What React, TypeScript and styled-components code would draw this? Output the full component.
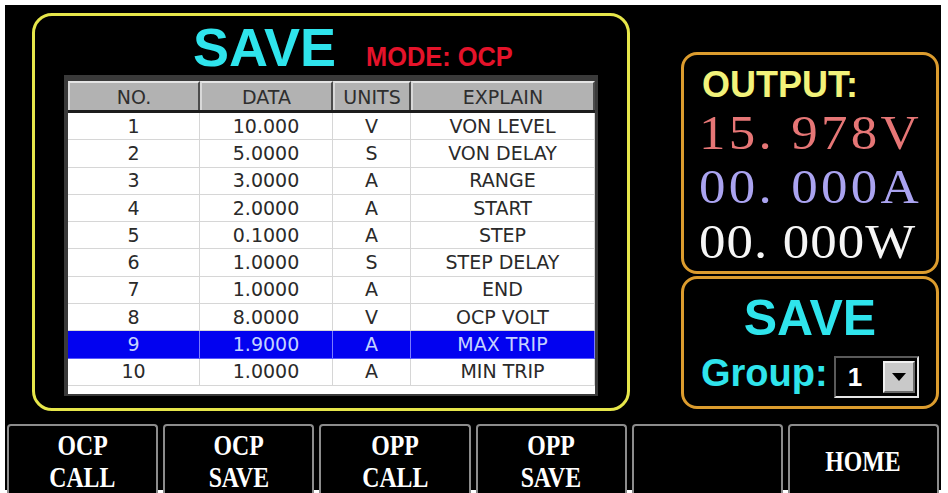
import React from "react";
import styled, { createGlobalStyle } from "styled-components";

const GlobalStyle = createGlobalStyle`
  html, body { margin: 0; padding: 0; background: #ffffff; }
  body {
    width: 948px;
    height: 493px;
    overflow: hidden;
    font-family: "Liberation Sans", Arial, sans-serif;
  }
`;

const Screen = styled.div`
  margin: 5px 7px 3px 5px;
  width: 936px;
  height: 485px;
  box-sizing: border-box;
  background: #000;
  padding: 8px 2px 0 2px;
  display: flex;
  flex-direction: column;
`;

const TopRow = styled.div`
  display: flex;
  padding-left: 25px;
  gap: 51px;
`;

const MainPanel = styled.section`
  width: 598px;
  height: 398px;
  box-sizing: border-box;
  border: 3px solid #e6e64a;
  border-radius: 20px;
  padding: 0 29px;
  display: flex;
  flex-direction: column;
`;

const TitleRow = styled.div`
  height: 59px;
  box-sizing: border-box;
  padding: 4px 0 0 129px;
  display: flex;
  align-items: baseline;
  gap: 30px;
`;

const BigTitle = styled.span<{ $size: number }>`
  font-family: "Liberation Sans", Arial, sans-serif;
  font-weight: 700;
  font-size: ${(p) => p.$size}px;
  line-height: ${(p) => p.$size}px;
  color: #2fe4ec;
`;

const ModeLabel = styled.span`
  font-family: "Liberation Sans", Arial, sans-serif;
  font-weight: 700;
  font-size: 27px;
  line-height: 27px;
  color: #e5132a;
  display: inline-block;
  transform: scaleX(0.94);
  transform-origin: left;
`;

const TableFrame = styled.div`
  width: 534px;
  height: 321px;
  box-sizing: border-box;
  background: #3a3a3a;
  padding: 6px 3px 2px 4px;
  display: flex;
`;

const TableBody = styled.div`
  flex: 1;
  background: #fff;
  display: flex;
  flex-direction: column;
`;

const cols = "132px 133px 78px 184px";

const HeaderRow = styled.div`
  display: grid;
  grid-template-columns: ${cols};
  height: 32px;
  box-sizing: border-box;
  border-bottom: 3px solid #1c1c1c;
  background: #b2b2b2;
`;

const HeaderCell = styled.div`
  box-sizing: border-box;
  border-top: 2px solid #e4e4e4;
  border-left: 2px solid #d8d8d8;
  border-right: 2px solid #4c4c4c;
  display: flex;
  align-items: center;
  justify-content: center;
  font-family: "DejaVu Sans", Verdana, sans-serif;
  font-size: 19px;
  color: #2e2e2e;
`;

const Row = styled.div<{ $selected?: boolean }>`
  display: grid;
  grid-template-columns: ${cols};
  height: 27.3px;
  box-sizing: border-box;
  border-bottom: 1px solid ${(p) => (p.$selected ? "#5a5aff" : "#d6d6d6")};
  background: ${(p) => (p.$selected ? "#0202f0" : "#ffffff")};
  color: ${(p) => (p.$selected ? "#c4d2ff" : "#2a2a2a")};
`;

const Cell = styled.div<{ $selected?: boolean }>`
  box-sizing: border-box;
  border-right: 1px solid ${(p) => (p.$selected ? "#7a7aff" : "#d6d6d6")};
  display: flex;
  align-items: center;
  justify-content: center;
  font-family: "DejaVu Sans", Verdana, sans-serif;
  font-size: 19px;
  line-height: 1;
`;

const RightColumn = styled.div`
  width: 258px;
  padding-top: 39px;
  display: flex;
  flex-direction: column;
  gap: 2px;
`;

const OrangePanel = styled.div<{ $height: number }>`
  height: ${(p) => p.$height}px;
  box-sizing: border-box;
  border: 3px solid #dc9c2e;
  border-radius: 16px;
  display: flex;
  flex-direction: column;
`;

const OutputBody = styled.div`
  padding: 9px 0 0 18px;
`;

const OutputTitle = styled.div`
  font-family: "Liberation Sans", Arial, sans-serif;
  font-weight: 700;
  font-size: 36px;
  line-height: 41.5px;
  color: #f2f27a;
`;

const ValueLine = styled.div<{ $color: string; $spacing: number }>`
  font-family: "Liberation Serif", "Times New Roman", serif;
  font-size: 49px;
  line-height: 54.5px;
  margin-left: -3px;
  white-space: pre;
  letter-spacing: ${(p) => p.$spacing}px;
  color: ${(p) => p.$color};
  transform: scaleX(1.08);
  transform-origin: left;
`;

const SaveBody = styled.div`
  padding-top: 14px;
  display: flex;
  flex-direction: column;
`;

const SaveTitle = styled(BigTitle)`
  text-align: center;
  display: block;
`;

const GroupRow = styled.div`
  margin-top: 12px;
  padding-left: 17px;
  display: flex;
  align-items: baseline;
  gap: 6px;
`;

const GroupLabel = styled.span`
  font-family: "Liberation Sans", Arial, sans-serif;
  font-weight: 700;
  font-size: 38px;
  line-height: 36px;
  color: #2fe4ec;
`;

const Dropdown = styled.div`
  width: 85px;
  height: 42px;
  box-sizing: border-box;
  border: 2px solid;
  border-color: #5a5a5a #e6e6e6 #e6e6e6 #5a5a5a;
  background: #000;
  display: flex;
  align-items: center;
  justify-content: space-between;
  padding: 0 2px 0 12px;
`;

const DropValue = styled.span`
  font-family: "Liberation Sans", Arial, sans-serif;
  font-weight: 700;
  font-size: 26px;
  line-height: 26px;
  color: #fff;
`;

const DropButton = styled.div`
  width: 32px;
  height: 32px;
  box-sizing: border-box;
  background: #c9c9c9;
  border: 2px solid;
  border-color: #f0f0f0 #6a6a6a #6a6a6a #f0f0f0;
  display: flex;
  align-items: center;
  justify-content: center;
`;

const Triangle = styled.span`
  width: 0;
  height: 0;
  border-left: 7px solid transparent;
  border-right: 7px solid transparent;
  border-top: 8px solid #000;
`;

const ButtonBar = styled.div`
  margin-top: 13px;
  height: 66px;
  display: grid;
  grid-template-columns: repeat(6, 1fr);
  gap: 5px;
`;

const SoftKey = styled.div`
  box-sizing: border-box;
  border: 2px solid #8c8c8c;
  border-bottom-color: #d0d0d0;
  border-radius: 4px 4px 0 0;
  background: #000;
  display: flex;
  flex-direction: column;
  align-items: center;
  justify-content: center;
  padding-top: 3px;
`;

const KeyLine = styled.span`
  display: block;
  font-family: "Liberation Serif", "Times New Roman", serif;
  font-weight: 700;
  font-size: 29px;
  line-height: 32px;
  color: #fff;
  text-align: center;
  transform: scaleX(0.82);
`;

const rows = [
  ["1", "10.000", "V", "VON LEVEL"],
  ["2", "5.0000", "S", "VON DELAY"],
  ["3", "3.0000", "A", "RANGE"],
  ["4", "2.0000", "A", "START"],
  ["5", "0.1000", "A", "STEP"],
  ["6", "1.0000", "S", "STEP DELAY"],
  ["7", "1.0000", "A", "END"],
  ["8", "8.0000", "V", "OCP VOLT"],
  ["9", "1.9000", "A", "MAX TRIP"],
  ["10", "1.0000", "A", "MIN TRIP"],
];

const keys = [["OCP", "CALL"], ["OCP", "SAVE"], ["OPP", "CALL"], ["OPP", "SAVE"], [], ["HOME"]];

export default function App() {
  return (
    <>
      <GlobalStyle />
      <Screen>
        <TopRow>
          <MainPanel>
            <TitleRow>
              <BigTitle $size={54}>SAVE</BigTitle>
              <ModeLabel>MODE: OCP</ModeLabel>
            </TitleRow>
            <TableFrame>
              <TableBody>
                <HeaderRow>
                  {["NO.", "DATA", "UNITS", "EXPLAIN"].map((h) => (
                    <HeaderCell key={h}>{h}</HeaderCell>
                  ))}
                </HeaderRow>
                {rows.map((r) => {
                  const sel = r[0] === "9";
                  return (
                    <Row key={r[0]} $selected={sel}>
                      {r.map((c, i) => (
                        <Cell key={i} $selected={sel}>
                          {c}
                        </Cell>
                      ))}
                    </Row>
                  );
                })}
              </TableBody>
            </TableFrame>
          </MainPanel>
          <RightColumn>
            <OrangePanel $height={222}>
              <OutputBody>
                <OutputTitle>OUTPUT:</OutputTitle>
                <ValueLine $color="#e67676" $spacing={3}>15. 978V</ValueLine>
                <ValueLine $color="#aaa3f0" $spacing={3}>00. 000A</ValueLine>
                <ValueLine $color="#f6f6f6" $spacing={1}>00. 000W</ValueLine>
              </OutputBody>
            </OrangePanel>
            <OrangePanel $height={133}>
              <SaveBody>
                <SaveTitle $size={50}>SAVE</SaveTitle>
                <GroupRow>
                  <GroupLabel>Group:</GroupLabel>
                  <Dropdown>
                    <DropValue>1</DropValue>
                    <DropButton>
                      <Triangle />
                    </DropButton>
                  </Dropdown>
                </GroupRow>
              </SaveBody>
            </OrangePanel>
          </RightColumn>
        </TopRow>
        <ButtonBar>
          {keys.map((k, i) => (
            <SoftKey key={i}>
              {k.map((line) => (
                <KeyLine key={line}>{line}</KeyLine>
              ))}
            </SoftKey>
          ))}
        </ButtonBar>
      </Screen>
    </>
  );
}
